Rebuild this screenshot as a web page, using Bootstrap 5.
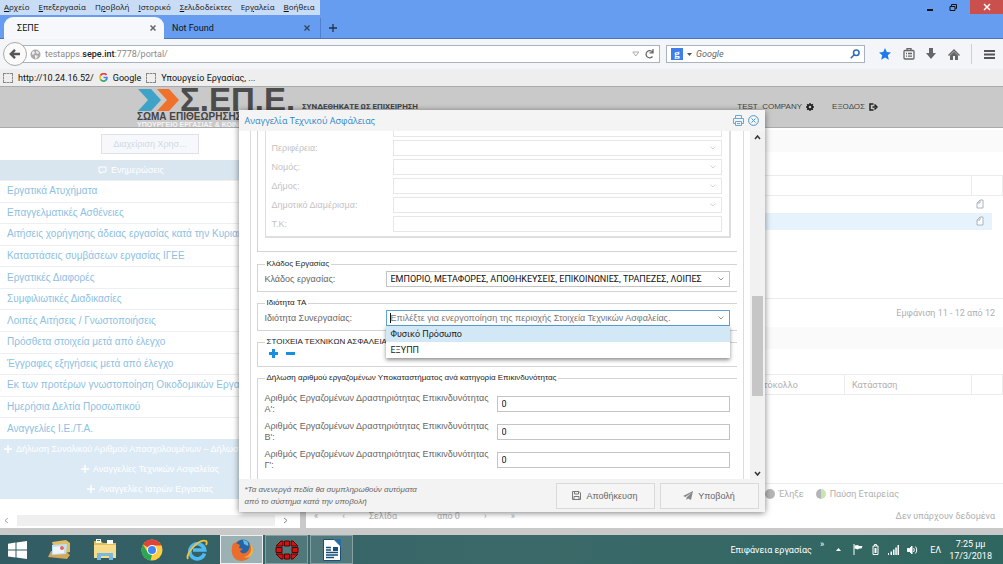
<!DOCTYPE html>
<html lang="el">
<head>
<meta charset="utf-8">
<meta name="viewport" content="width=device-width, initial-scale=1">
<title>ΣΕΠΕ</title>
<link href="https://cdn.jsdelivr.net/npm/bootstrap@5.3.0/dist/css/bootstrap.min.css" rel="stylesheet">
<style>
:root{--ui:Roboto,"Noto Sans",sans-serif;--wide:"Open Sans","Noto Sans",sans-serif;--page:"Liberation Sans",Arial,sans-serif}
html,body{height:100%}
body{font:9px/12px var(--ui);color:#111;background:#c9c9c9;overflow:hidden}
button{font:inherit;color:inherit;background:none;border:0;padding:0}
a{color:inherit;text-decoration:none}
svg{display:block;flex:none}
.titlebar{background:#669df0;height:39px;border-bottom:1px solid #4a74bd}
.menubar a{padding:0 5px 0 4px;height:15px;font:8px/14px var(--wide);background:#c9dcf6}
.menubar a u{text-underline-offset:1px}
.wincontrols button{height:14px;display:grid;place-items:center}
.wincontrols .close-win{width:33px;background:#c9504c}
.tabstrip{height:23px;padding-left:4px}
.tab-on{width:160px;height:22px;background:#f6f8fb;border-radius:9px 9px 0 0;padding:0 8px 0 13px;margin-bottom:-1px}
.tab-off{width:157px;padding:0 10px 0 8px;border-right:1px solid #4f80d0;height:20px}
.newtab{height:20px}
.navrow{height:30px;background:#f4f5f8;padding:0 8px 0 3px;gap:6px}
.back{width:24px;height:24px;border:1px solid #a9a9a9;border-radius:50%;background:#fafafa;display:grid;place-items:center;margin-right:-14px;z-index:2}
.field-box{height:18px;background:#fff;border:1px solid #aab3bd}
.addressbar{padding:0 4px 0 10px}
.field-box input{border:0;outline:0;background:none;min-width:0;padding:0}
.urltext{color:#8a8a8a}
.urltext b{color:#222;font-weight:500}
.searchbox{width:199px}
.searchbox input{font-style:italic;font-size:9px;color:#666}
.searchbox input::placeholder{color:#666;opacity:1}
.glogo{width:12px;height:12px;background:#3f7ee8;color:#fff;font:bold 11px/11px "Liberation Serif",serif;text-align:center}
.toolicons{width:124px}
.vr-line{width:1px;height:20px;background:#cfcfcf}
.bookmarks{height:18px;background:#eeeeee;border-bottom:1px solid #aaa;padding:0 3px;gap:5px}
.dotbox{width:10px;height:10px;border:1px dashed #888}
.portal{flex:1 1 auto;min-height:0;position:relative;font-family:var(--page)}
.masthead{height:41px;background:#c9c9c9;padding-left:137px;color:#444;border-bottom:1px solid #ababab}
.brandbox{width:157px}
.brandbig{font:bold 33px/25px var(--page);color:#4c4c4c}
.brandmid{font:bold 10px/10px var(--page);color:#444;white-space:nowrap}
.brandlow{font:bold 7px/6px var(--page);color:#f4f4f4;white-space:nowrap}
.mast-text{font:8px/12px var(--page);padding-top:14px}
.mast-text.hello{font:bold 8px/12px var(--ui)}
.userlinks{padding-right:125px;gap:18px}
.sidebar{width:300px;background:#fff;overflow:hidden}
.manage{width:98px;height:20px;border:1px solid #dfe2ea;background:#f7f8fb;color:#d0d8e4;margin:6px 0 6px 101px}
.sidehead{height:20px;background:#d9e6f0;color:#fff;padding-right:38px}
.sidelist a{flex:1 1 0;display:flex;align-items:center;padding-left:7px;font:10px/12px var(--page);color:#8dbfe3;border-top:1px solid #edf0f3;white-space:nowrap}
.sidesub{background:#dceaf5;color:#fff;margin-bottom:16px;width:300px;font:9px/12px var(--page)}
.sidesub a{height:20px;white-space:nowrap}
.hscroll{height:11px;margin-bottom:2px;color:#b5b5b5;padding:0 4px}
.hscroll i{flex:1;background:#efefef;margin:0 8px;height:11px}
.content{flex:1;margin-left:6px;background:#fff;color:#b0b0b0;font:9px/12px var(--ui);min-width:0}
.band{background:#fafafa;height:22px}
.band.first{margin:2px 0 23px}
.band.second{margin-bottom:25px}
.gap-a{flex:70}
.gap-b{flex:89}
.gridtab{width:100%;table-layout:fixed;border-collapse:collapse}
.gridtab th{font-weight:400;height:20px;border:1px solid #ececec;border-left:0;padding:0 7px}
.gridtab th.proto{text-align:right;padding-right:46px}
.gridtab td{height:17px;padding:0 4px}
.gridtab .picked td{background:#e6f3fd}
.gridtab .picked td:last-child{background:linear-gradient(90deg,#e6f3fd 20px,#fff 20px)}
.c-act{width:31px}
.c-state{width:127px}
.pageline{border-top:1px solid #ececec;padding:0 8px;height:29px}
.pageline.legendline{height:20px;padding-right:104px}
.dot{width:10px;height:10px;border-radius:50%;background:#b5b5b5}
.dot.half{background:linear-gradient(90deg,#b5b5b5 50%,#c5e6b0 50%)}
.pager{height:25px}
.overlay{position:absolute;inset:0;display:flex;align-items:center;justify-content:center}
.dlg{width:526px;max-width:96%;background:#fff;box-shadow:0 1px 6px rgba(0,0,0,.5);color:#666;border-radius:2px}
.dlg-head{height:21px;background:#f4f4f4;padding:0 6px;color:#2e86c8;font:9px/21px var(--wide)}
.dlg-body{height:348px;overflow:hidden}
.dlg-form{flex:1;margin:0 6px 0 11px;border:1px solid #dcdcdc;border-width:0 1px;padding:0 6px 0 6px;overflow:hidden;min-width:0}
.dlg-form fieldset{border:1px solid #d4d4d4;border-right:0;padding:0 7px;margin-bottom:5px;min-width:0}
.dlg-form legend{float:none;width:auto;font:8px/12px var(--page);color:#222;margin:0 0 1px 0;padding:0 2px}
.dlg-form fieldset.outer{border-top:0;height:121px;margin-bottom:6px}
.inner{border:2px solid #dedede;border-width:0 2px 2px 1px;height:107px;padding:0 7px 3px 6px;width:466px;overflow:hidden;display:flex;flex-direction:column;justify-content:flex-end}
.inner .frow{height:19px;flex:none;opacity:.4}
.frow{display:flex;align-items:center}
.frow label{flex:1 1 0;font:9px/12px var(--page)}
.dlg .form-select,.dlg .form-control{height:16px;min-height:0;border:1px solid #c4c4c4;border-radius:0;font:9px/12px var(--ui);color:#111;padding:0 18px 0 4px;box-shadow:none;background-color:#fff;background-size:8px 8px;background-position:right 4px center}
.dlg .w-in{width:329px}
.dlg .w-mid{width:344px;flex:none}
.dlg .w-num{width:233px}
.dlg .combo{border-color:#5da3d3;font-family:var(--page);
 background-image:linear-gradient(#111,#111),url("data:image/svg+xml,%3Csvg xmlns='http://www.w3.org/2000/svg' viewBox='0 0 8 8' fill='none' stroke='%23999'%3E%3Cpath d='M1.500 2.500l2.500 2.500 2.500-2.500'/%3E%3C/svg%3E");
 background-size:1px 10px,8px 8px;background-position:3px center,right 4px center;background-repeat:no-repeat}
.dlg .form-select{--bs-form-select-bg-img:url("data:image/svg+xml,%3Csvg xmlns='http://www.w3.org/2000/svg' viewBox='0 0 8 8' fill='none' stroke='%23999'%3E%3Cpath d='M1.500 2.500l2.500 2.500 2.500-2.500'/%3E%3C/svg%3E")}
.combo::placeholder{color:#777!important;opacity:1}
.combo-wrap{position:relative}
.combo-list{position:absolute;top:16px;left:0;right:0;background:#fff;box-shadow:0 2px 4px rgba(0,0,0,.45);margin:0;padding:0;list-style:none;z-index:3;color:#222;font:9px/16px var(--ui)}
.combo-list li{height:16px;padding-left:5px}
.combo-list .hot{background:#d3e8f6}
.numrows{padding:5px 0 48px}
.frow.numrow{height:28px}
.frow.numrow label{line-height:11px}
.vscroll{width:15px;background:#f1f1f1;padding:4px 0 3px;color:#333}
.vscroll i{width:11px;background:#c6c6c6;height:100px}
.above{flex:154}
.below{flex:74}
.dlg-foot{height:33px;background:#f3f3f3;padding:0 6px;gap:5px}
.dlg-foot em{font:italic 8px/12px var(--page)}
.dlg-foot .btn{width:99px;height:26px;border:1px solid #d9d9d9;border-radius:0;background:#f5f5f5;color:#666;font:9px/12px var(--page);padding:0;display:flex;align-items:center;justify-content:center;gap:5px}
.taskbar{height:29px;background:linear-gradient(90deg,#315c63,#3b6969 50%,#2f665f);color:#fff}
.taskbar .app{width:43px;height:29px;display:grid;place-items:center;margin-right:2px;border:1px solid transparent}
.taskbar .app.people{width:32px;margin:0 8px 0 -2px}
.taskbar .app.open{background:rgba(255,255,255,.13);border-color:rgba(255,255,255,.3)}
.taskbar .app.active{background:rgba(255,255,255,.5);border-color:rgba(255,255,255,.8)}
.tray{padding-right:11px}
.gray-gap{height:7px}
</style>
</head>
<body class="d-flex flex-column">
<header class="titlebar">
  <div class="d-flex justify-content-between">
    <nav class="menubar d-flex" aria-label="Μενού"><a href="#"><u>Α</u>ρχείο</a><a href="#"><u>Ε</u>πεξεργασία</a><a href="#">Π<u>ρ</u>οβολή</a><a href="#"><u>Ι</u>στορικό</a><a href="#"><u>Σ</u>ελιδοδείκτες</a><a href="#">Ερ<u>γ</u>αλεία</a><a href="#"><u>Β</u>οήθεια</a></nav>
    <div class="wincontrols d-flex gap-2">
      <button aria-label="Ελαχιστοποίηση" class="px-1"><svg width="6" height="8"><path d="M0 7h6" stroke="#111" stroke-width="2"/></svg></button>
      <button aria-label="Επαναφορά" class="px-1"><svg width="9" height="9" fill="none" stroke="#111"><path d="M1 3.500h5v4H1zM2.500 3V1.500h5v4H6.500"/></svg></button>
      <button aria-label="Κλείσιμο" class="close-win"><svg width="8" height="8" stroke="#fff" stroke-width="1.500"><path d="M1 1l6 6M7 1L1 7"/></svg></button>
    </div>
  </div>
  <div class="tabstrip d-flex align-items-end">
    <div class="tab-on d-flex align-items-center justify-content-between"><span>ΣΕΠΕ</span><button aria-label="Κλείσιμο καρτέλας"><svg width="6" height="6" stroke="#666" stroke-width="1.500"><path d="M.500.500l5 5M5.500.500l-5 5"/></svg></button></div>
    <div class="tab-off d-flex align-items-center justify-content-between"><span>Not Found</span><button aria-label="Κλείσιμο καρτέλας"><svg width="6" height="6" stroke="#345" stroke-width="1.300"><path d="M.500.500l5 5M5.500.500l-5 5"/></svg></button></div>
    <button class="newtab px-2" aria-label="Νέα καρτέλα"><svg width="8" height="8" stroke="#234" stroke-width="1.300"><path d="M4 0v8M0 4h8"/></svg></button>
  </div>
</header>
<div class="navrow d-flex align-items-center">
  <button class="back" aria-label="Πίσω"><svg width="12" height="10" fill="none" stroke="#555" stroke-width="2.400"><path d="M6 .8L1.800 5 6 9.200M2 5h9"/></svg></button>
  <div class="field-box addressbar d-flex align-items-center flex-grow-1 gap-1">
    <svg width="11" height="11" viewBox="0 0 11 11"><circle cx="5.500" cy="5.500" r="5" fill="#aaa"/><path d="M2 3l2-1 1 2-2 2-1-1zM6 2l3 1-1 2-2-1zM5 6l3 1-2 3-1-1z" fill="#eee"/></svg>
    <span class="urltext flex-grow-1">testapps.<b>sepe.int</b>:7778/portal/</span>
    <svg width="8" height="6" fill="none" stroke="#aaa"><path d="M.800 1h6L3.800 5z"/></svg>
    <button aria-label="Ανανέωση"><svg width="11" height="10" fill="none" stroke="#666" stroke-width="1.300"><path d="M8.500 7.500A3.600 3.600 0 1 1 8.500 3M9 0v3.800H5.500"/></svg></button>
  </div>
  <label class="searchbox field-box d-flex align-items-center px-1 gap-1"><span class="glogo">g</span><svg width="5" height="3"><path d="M0 0h5L2.500 3z" fill="#555"/></svg><input class="flex-grow-1" type="text" placeholder="Google" aria-label="Αναζήτηση"><svg width="10" height="10" fill="none" stroke="#2a6bb5" stroke-width="1.500"><circle cx="6.300" cy="3.700" r="2.800"/><path d="M4.200 5.800L.700 9.300"/></svg></label>
  <div class="toolicons d-flex align-items-center justify-content-between ps-2">
    <svg width="12" height="12" viewBox="0 0 12 12"><path d="M6 0l1.800 4 4.200.4-3.200 2.900 1 4.400L6 9.400l-3.800 2.300 1-4.400L0 4.400 4.200 4z" fill="#1f7be8"/></svg>
    <svg width="12" height="12" fill="none" stroke="#666" stroke-width="1.300"><rect x="1" y="2.500" width="10" height="8.500" rx="1"/><path d="M4 2V.700h4V2M3 5.500h1m1 0h4M3 8.200h1m1 0h4"/></svg>
    <svg width="10" height="12" fill="#666"><path d="M3 0h4v5h3L5 11 0 5h3z"/></svg>
    <svg width="12" height="11" fill="#666"><path d="M6 0l6 6-1 1-5-5-5 5-1-1zM2 6.500l4-4 4 4V11H7V7H5v4H2z"/></svg>
    <span class="vr-line"></span>
    <svg width="11" height="9" stroke="#555" stroke-width="2"><path d="M0 1h11M0 4.500h11M0 8h11"/></svg>
  </div>
</div>
<nav class="bookmarks d-flex align-items-center" aria-label="Σελιδοδείκτες"><span class="dotbox"></span><a href="#">http://10.24.16.52/</a><svg width="9" height="9" viewBox="0 0 9 9" fill="none" stroke-width="1.700"><path d="M7.500 2A3.500 3.500 0 0 0 1.500 2.700" stroke="#ea4335"/><path d="M1.500 2.700a3.500 3.500 0 0 0 0 3.600" stroke="#fbbc05"/><path d="M1.500 6.300a3.500 3.500 0 0 0 5 1.200" stroke="#34a853"/><path d="M6.500 7.500A3.500 3.500 0 0 0 8 4.500H4.500" stroke="#4285f4"/></svg><a href="#">Google</a><span class="dotbox"></span><a href="#">Υπουργείο Εργασίας, ...</a></nav>

<main class="portal d-flex flex-column">
  <div class="masthead d-flex">
    <div class="brandbox">
      <div class="d-flex"><svg width="43" height="25" viewBox="0 0 43 25"><path d="M1 2h13l10 11-10 11H1l10-11z" fill="#3fa3c8"/><path d="M20 2h12l10 11-10 11H20l10-11z" fill="#f0722a"/></svg><div class="brandbig">Σ.ΕΠ.Ε.</div></div>
      <div class="brandmid">ΣΩΜΑ ΕΠΙΘΕΩΡΗΣΗΣ</div>
      <div class="brandlow">ΥΠΟΥΡΓΕΙΟ ΕΡΓΑΣΙΑΣ &amp; ΚΟΙΝΩΝ</div>
    </div>
    <div class="mast-text hello ps-2">ΣΥΝΔΕΘΗΚΑΤΕ ΩΣ ΕΠΙΧΕΙΡΗΣΗ</div>
    <div class="mast-text userlinks ms-auto d-flex align-items-start"><a href="#" class="d-flex align-items-center gap-1">TEST_COMPANY <svg width="8" height="8" viewBox="0 0 8 8"><circle cx="4" cy="4" r="2.200" fill="none" stroke="#222" stroke-width="1.800"/><path d="M4 0v1.500M4 6.500V8M0 4h1.500M6.500 4H8M1.200 1.200l1 1M5.800 5.800l1 1M6.800 1.200l-1 1M2.200 5.800l-1 1" stroke="#222" stroke-width="1.400"/></svg></a><a href="#" class="d-flex align-items-center gap-1">ΕΞΟΔΟΣ <svg width="9" height="8" viewBox="0 0 9 8" fill="none" stroke="#222" stroke-width="1.500"><path d="M4.500 1H1v6h3.500M3.500 4h3M5.500 1.500L8 4 5.500 6.500"/></svg></a></div>
  </div>
  <div class="d-flex flex-grow-1">
    <aside class="sidebar d-flex flex-column">
      <button class="manage">Διαχείριση Χρησ...</button>
      <div class="sidehead d-flex align-items-center justify-content-center gap-1"><svg width="9" height="8" fill="none" stroke="#fff"><path d="M1 1h7v5H4L2.500 7.500V6H1z"/></svg>Ενημερώσεις</div>
      <nav class="sidelist d-flex flex-column flex-grow-1" aria-label="Ενημερώσεις"><a href="#">Εργατικά Ατυχήματα</a><a href="#">Επαγγελματικές Ασθένειες</a><a href="#">Αιτήσεις χορήγησης άδειας εργασίας κατά την Κυριακή</a><a href="#">Καταστάσεις συμβάσεων εργασίας ΙΓΕΕ</a><a href="#">Εργατικές Διαφορές</a><a href="#">Συμφιλιωτικές Διαδικασίες</a><a href="#">Λοιπές Αιτήσεις / Γνωστοποιήσεις</a><a href="#">Πρόσθετα στοιχεία μετά από έλεγχο</a><a href="#">Έγγραφες εξηγήσεις μετά από έλεγχο</a><a href="#">Εκ των προτέρων γνωστοποίηση Οικοδομικών Εργασιών</a><a href="#">Ημερήσια Δελτία Προσωπικού</a><a href="#">Αναγγελίες Ι.Ε./Τ.Α.</a></nav>
      <nav class="sidesub" aria-label="Αναγγελίες">
        <a href="#" class="d-flex align-items-center gap-1 ps-1"><svg width="8" height="8" stroke="#fff" stroke-width="1.500"><path d="M4 0v8M0 4h8"/></svg>Δήλωση Συνολικού Αριθμού Απασχολουμένων – Δήλωση Εργαζ.</a>
        <a href="#" class="d-flex align-items-center justify-content-center gap-1"><svg width="8" height="8" stroke="#fff" stroke-width="1.500"><path d="M4 0v8M0 4h8"/></svg>Αναγγελίες Τεχνικών Ασφαλείας</a>
        <a href="#" class="d-flex align-items-center justify-content-center gap-1"><svg width="8" height="8" stroke="#fff" stroke-width="1.500"><path d="M4 0v8M0 4h8"/></svg>Αναγγελίες Ιατρών Εργασίας</a>
      </nav>
      <div class="hscroll d-flex align-items-center"><svg width="5" height="7" fill="none" stroke="#aaa"><path d="M4 1L1 3.500 4 6"/></svg><i></i><svg width="5" height="7" class="me-2" fill="none" stroke="#888"><path d="M1 1l3 2.500L1 6"/></svg></div>
    </aside>
    <section class="content d-flex flex-column">
      <div class="band first"></div>
      <table class="gridtab"><colgroup><col><col class="c-act"></colgroup><thead><tr><th></th><th></th></tr></thead>
        <tbody><tr><td></td><td><svg width="8" height="10" fill="#fff" stroke="#a9b4be"><path d="M1 4l3-3h3v8H1zM4 1v3H1"/></svg></td></tr><tr class="picked"><td></td><td><svg width="8" height="10" fill="#fff" stroke="#a9b4be"><path d="M1 4l3-3h3v8H1zM4 1v3H1"/></svg></td></tr></tbody></table>
      <div class="gap-a"></div>
      <div class="pageline d-flex align-items-center justify-content-end">Εμφάνιση 11 - 12 από 12</div>
      <div class="band second"></div>
      <table class="gridtab"><colgroup><col><col class="c-state"><col class="c-act"></colgroup><thead><tr><th class="proto">Πρωτόκολλο</th><th>Κατάσταση</th><th></th></tr></thead></table>
      <div class="gap-b"></div>
      <div class="pageline legendline d-flex align-items-center gap-1 justify-content-end"><span class="dot"></span><span>Έληξε</span><span class="dot half ms-2"></span><span>Παύση Εταιρείας</span></div>
      <div class="pager d-flex align-items-center justify-content-between px-2"><div class="d-flex gap-4"><span>«</span><span>‹</span><span>Σελίδα</span><span class="ps-3">από 0</span><span>›</span><span>»</span></div><span>Δεν υπάρχουν δεδομένα</span></div>
    </section>
  </div>
  <div class="gray-gap"></div>

  <div class="overlay">
    <form class="dlg" role="dialog" aria-labelledby="dlgTitle">
      <div class="dlg-head d-flex align-items-center justify-content-between"><span id="dlgTitle">Αναγγελία Τεχνικού Ασφάλειας</span>
        <span class="d-flex gap-1"><button type="button" aria-label="Εκτύπωση"><svg width="11" height="11" fill="none" stroke="#6ba6d4"><path d="M2.500 3.500v-3h6v3M2.500 8.500h-2v-5h10v5h-2M2.500 6.500h6v4h-6zM4 8.500h3"/></svg></button><button type="button" aria-label="Κλείσιμο"><svg width="11" height="11" fill="none" stroke="#4f96cc"><circle cx="5.500" cy="5.500" r="4.900"/><path d="M3.500 3.500l4 4M7.500 3.500l-4 4"/></svg></button></span></div>
      <div class="dlg-body d-flex">
        <div class="dlg-form">
          <fieldset class="outer">
            <div class="inner">
              <div class="frow justify-content-end"><input class="form-control w-in" aria-label="Διεύθυνση" disabled></div>
              <div class="frow"><label for="f1">Περιφέρεια:</label><select id="f1" class="form-select w-in" disabled></select></div>
              <div class="frow"><label for="f2">Νομός:</label><select id="f2" class="form-select w-in" disabled></select></div>
              <div class="frow"><label for="f3">Δήμος:</label><select id="f3" class="form-select w-in" disabled></select></div>
              <div class="frow"><label for="f4">Δημοτικό Διαμέρισμα:</label><select id="f4" class="form-select w-in" disabled></select></div>
              <div class="frow"><label for="f5">Τ.Κ:</label><input id="f5" class="form-control w-in" disabled></div>
            </div>
          </fieldset>
          <fieldset><legend>Κλάδος Εργασίας</legend><div class="frow mb-1"><label for="f6">Κλάδος εργασίας:</label><select id="f6" class="form-select w-mid"><option>ΕΜΠΟΡΙΟ, ΜΕΤΑΦΟΡΕΣ, ΑΠΟΘΗΚΕΥΣΕΙΣ, ΕΠΙΚΟΙΝΩΝΙΕΣ, ΤΡΑΠΕΖΕΣ, ΛΟΙΠΕΣ</option></select></div></fieldset>
          <fieldset><legend>Ιδιότητα ΤΑ</legend><div class="frow mb-1"><label for="f7">Ιδιότητα Συνεργασίας:</label><div class="combo-wrap w-mid"><input id="f7" class="form-control combo" type="text" placeholder="Επιλέξτε για ενεργοποίηση της περιοχής Στοιχεία Τεχνικών Ασφαλείας."><ul class="combo-list"><li class="hot">Φυσικό Πρόσωπο</li><li>ΕΞΥΠΠ</li></ul></div></div></fieldset>
          <fieldset><legend>ΣΤΟΙΧΕΙΑ ΤΕΧΝΙΚΩΝ ΑΣΦΑΛΕΙΑΣ</legend><div class="d-flex gap-2 pb-2"><button type="button" class="ps-1" aria-label="Προσθήκη"><svg width="9" height="9" stroke="#1a8fe0" stroke-width="3"><path d="M4.500 0v9M0 4.500h9"/></svg></button><button type="button" aria-label="Αφαίρεση"><svg width="9" height="9" stroke="#1a8fe0" stroke-width="3"><path d="M0 4.500h9"/></svg></button></div></fieldset>
          <fieldset><legend>Δήλωση αριθμού εργαζομένων Υποκαταστήματος ανά κατηγορία Επικινδυνότητας</legend>
            <div class="numrows">
            <div class="frow numrow"><label for="n1">Αριθμός Εργαζομένων Δραστηριότητας Επικινδυνότητας<br>Α':</label><input id="n1" class="form-control w-num" value="0"></div>
            <div class="frow numrow"><label for="n2">Αριθμός Εργαζομένων Δραστηριότητας Επικινδυνότητας<br>Β':</label><input id="n2" class="form-control w-num" value="0"></div>
            <div class="frow numrow"><label for="n3">Αριθμός Εργαζομένων Δραστηριότητας Επικινδυνότητας<br>Γ':</label><input id="n3" class="form-control w-num" value="0"></div>
            </div>
          </fieldset>
        </div>
        <div class="vscroll d-flex flex-column align-items-center"><svg width="7" height="5" fill="none" stroke="#333" stroke-width="1.500"><path d="M1 4l2.500-3L6 4"/></svg><span class="above"></span><i></i><span class="below"></span><svg width="7" height="5" fill="none" stroke="#333" stroke-width="1.500"><path d="M1 1l2.500 3L6 1"/></svg></div>
      </div>
      <div class="dlg-foot d-flex align-items-center"><em class="me-auto">*Τα ανενεργά πεδία θα συμπληρωθούν αυτόματα<br>από το σύστημα κατά την υποβολή</em>
        <button type="button" class="btn"><svg width="9" height="9" fill="none" stroke="#777"><path d="M.500.500h6.500l1.500 1.500v6.500h-8zM2.500.500v2.500h4V.500M2 8.500v-3h5v3"/></svg>Αποθήκευση</button>
        <button type="submit" class="btn"><svg width="10" height="9" fill="#888"><path d="M10 0L8 9 5 7.500 3.500 9V6.500L8.500 1.500 2.500 6 0 5z"/></svg>Υποβολή</button></div>
    </form>
  </div>
</main>

<footer class="taskbar d-flex align-items-center">
  <div class="app"><svg class="me-2" width="19" height="18" fill="#fff"><path d="M0 2.700L7.500 1.500v7H0zM8.500 1.400L19 0v8.500H8.500zM0 9.500h7.500v7L0 15.500zM8.500 9.500H19V18L8.500 16.600z"/></svg></div>
  <div class="app people"><svg width="22" height="20"><path d="M4 2l14-2 4 3v9l-14 3z" fill="#e0bd67"/><path d="M0 17l3-6h14l5 4-3 4z" fill="#d5a75a"/><path d="M4 5l15-1-1 10-14 1z" fill="#bfe1f2"/><path d="M5 7l11-1v7L5 14z" fill="#eef6fa"/><circle cx="14" cy="8" r="2" fill="#d66"/></svg></div>
  <div class="app me-1"><svg width="24" height="22"><path d="M1 2h7l2 2h13v14H1z" fill="#e5bf55"/><path d="M3 0h5v4H3zM14 1h6v4h-6z" fill="#fff"/><path d="M4 1h3v1H4z" fill="#2a2"/><path d="M1 6h22v13H1z" fill="#f5dd8d"/><path d="M4 21v-7h16v7h-4v-4H8v4z" fill="#79b9e0"/></svg></div>
  <div class="app"><svg width="22" height="22" viewBox="0 0 22 22"><circle cx="11" cy="11" r="10.500" fill="#ffcd40"/><path d="M11 11L2 5.500A10.500 10.500 0 0 1 20.500 6.500H11z" fill="#e0433a"/><path d="M2 5.500l4.800 8L11 16l-1.500 5.400A10.500 10.500 0 0 1 2 5.500z" fill="#2da652"/><circle cx="11" cy="11" r="5" fill="#fff"/><circle cx="11" cy="11" r="4" fill="#4285f4"/></svg></div>
  <div class="app"><svg width="22" height="22" viewBox="0 0 22 22" fill="none"><path d="M18.500 14.500A7.500 7.500 0 1 1 18.700 11H7" stroke="#4fb9f0" stroke-width="3.600"/><path d="M2 20C-1 15 13-1 20 2c1 1 1 2 0 4" stroke="#f0c53c" stroke-width="1.800"/></svg></div>
  <div class="app active"><svg width="22" height="22" viewBox="0 0 22 22"><circle cx="11" cy="11" r="10" fill="#e8662a"/><circle cx="12" cy="8" r="7.500" fill="#2465a8"/><path d="M12 1c4 0 6 3 5 6l-4-2z" fill="#65bce0"/><path d="M1.500 6C3 3 3 5 4 4l3 1 2 1-1 3 4 1-3 2c1 3 5 3 7 1 3-3 3-6 2-9 5 6 3 17-7 18C2 22-1 13 1.500 6z" fill="#ea6d2c"/><path d="M19 5c3 6 0 12-6 13 5 2 9-2 9-7 0-2-1-5-3-6z" fill="#f6b23c"/></svg></div>
  <div class="app open"><svg width="24" height="20" fill="#d31212" stroke="#500"><path d="M1 6l5-5h2v5H1zM9.500 1h5v5h-5zM16 1h2l5 5h-7zM1 7.500h6v5H1zM17 7.500h6v5h-6zM1 14h7v5H6zM9.500 14h5v5h-5zM16 14h7l-5 5h-2z"/></svg></div>
  <div class="app open"><svg width="18" height="22"><path d="M.500.500h11l6 6v15H.500z" fill="#fff" stroke="#154f7a"/><path d="M10 0h8v8z" fill="#2a6da0"/><path d="M3 8.500h5M3 11h5M3 13.500h12M3 16h12M3 18.500h8" stroke="#154f7a" stroke-width="1.300"/><path d="M10 8h5v4h-5z" fill="#154f7a"/></svg></div>
  <div class="tray ms-auto d-flex align-items-center gap-2"><span>Επιφάνεια εργασίας</span><span class="align-self-start">»</span>
    <svg class="ms-1" width="5" height="3" fill="#fff"><path d="M0 3h5L2.500 0z"/></svg>
    <svg class="ms-1" width="11" height="11"><path d="M1 0v11" stroke="#fff"/><path d="M1.500 1.500l4-.500v1l4 0-1 2.500H6L5 5.500l-3.500-1z" fill="#fff"/></svg>
    <svg width="8" height="11" fill="none" stroke="#fff"><path d="M1 2h5v8.500H1zM2.500 2V.500h2V2"/><path d="M3.500 4v5" stroke-width="2"/></svg>
    <svg width="11" height="10" fill="#fff"><path d="M0 8h1v2H0zM2.500 6.500h1.500V10H2.500zM5 4.500h1.500V10H5zM7.300 2.500h1.500V10H7.300zM9.500 0H11v10H9.500z"/></svg>
    <svg width="11" height="10" fill="none" stroke="#fff"><path d="M.5 3.500h2L5 1v8L2.500 6.500h-2z" fill="#fff"/><path d="M6.500 3a3 3 0 0 1 0 4M8.300 1.500a5 5 0 0 1 0 7"/></svg>
    <span class="ps-1">ΕΛ</span><span class="text-center">7:25 μμ<br>17/3/2018</span></div>
</footer>
<script src="https://cdn.jsdelivr.net/npm/bootstrap@5.3.0/dist/js/bootstrap.bundle.min.js"></script>
</body>
</html>
